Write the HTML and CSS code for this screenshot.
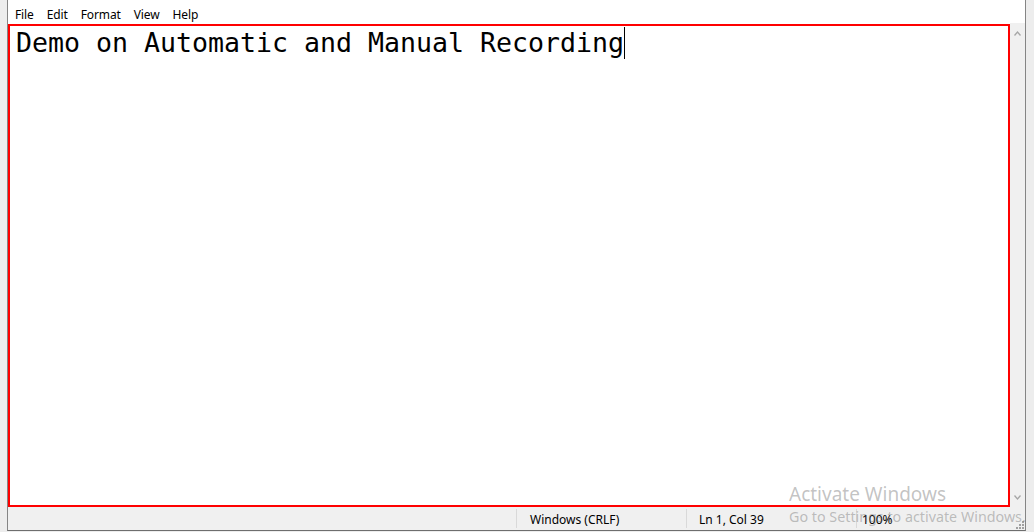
FILE: index.html
```html
<!DOCTYPE html>
<html lang="en">
<head>
<meta charset="utf-8">
<title>Untitled - Notepad</title>
<link rel="stylesheet" href="styles.css">
</head>
<body>
<div class="window">
  <nav class="menubar">
    <span class="menu-item">File</span>
    <span class="menu-item">Edit</span>
    <span class="menu-item">Format</span>
    <span class="menu-item">View</span>
    <span class="menu-item">Help</span>
  </nav>
  <div class="main">
    <div class="editor"><span class="line">Demo on Automatic and Manual Recording</span><span class="caret"></span></div>
    <div class="scrollbar">
      <span class="arrow arrow-up"><svg width="7" height="5" viewBox="0 0 7 5"><polyline points="0.5,4.5 3.5,1 6.5,4.5" fill="none" stroke="#a6a6a6" stroke-width="1.3"/></svg></span>
      <span class="arrow arrow-down"><svg width="7" height="5" viewBox="0 0 7 5"><polyline points="0.5,0.5 3.5,4 6.5,0.5" fill="none" stroke="#a6a6a6" stroke-width="1.3"/></svg></span>
    </div>
    <div class="highlight"></div>
  </div>
  <div class="statusbar">
    <div class="spacer"></div>
    <div class="pane pane-eol">Windows (CRLF)</div>
    <div class="pane pane-pos">Ln 1, Col 39</div>
    <div class="pane pane-zoom">100%</div>
    <span class="grip"><svg width="8" height="8" viewBox="0 0 8 8"><g fill="#a0a0a0"><rect x="6" y="0" width="2" height="2"/><rect x="3" y="3" width="2" height="2"/><rect x="6" y="3" width="2" height="2"/><rect x="0" y="6" width="2" height="2"/><rect x="3" y="6" width="2" height="2"/><rect x="6" y="6" width="2" height="2"/></g></svg></span>
  </div>
</div>
<div class="watermark">
  <div class="wm-title">Activate Windows</div>
  <div class="wm-sub">Go to Settings to activate Windows.</div>
</div>
</body>
</html>
```
FILE: styles.css
```css
html, body {
  margin: 0;
  padding: 0;
}
body {
  width: 1034px;
  height: 532px;
  overflow: hidden;
  position: relative;
  background: #ededed;
  font-family: "Noto Sans", "Segoe UI", sans-serif;
  color: #000;
}
.window {
  margin-left: 7px;
  width: 1019px;
  box-sizing: border-box;
  border-left: 1px solid #858585;
  border-right: 1px solid #858585;
  border-bottom: 1px solid #6e6e6e;
  background: #fff;
  display: flex;
  flex-direction: column;
}
.menubar {
  height: 23px;
  box-sizing: border-box;
  padding: 7px 0 0 0.5px;
  display: flex;
  font-size: 12px;
  line-height: 16px;
  letter-spacing: -0.12px;
  background: #fff;
}
.menu-item {
  padding: 0 6.5px;
}
.main {
  position: relative;
  display: flex;
  height: 484px;
}
.editor {
  flex: 1;
  padding: 4px 0 0 8px;
  font-family: "DejaVu Sans Mono", "Liberation Mono", monospace;
  font-size: 26.58px;
  line-height: 32px;
  white-space: pre;
  color: #000;
  background: #fff;
}
.caret {
  display: inline-block;
  width: 1px;
  height: 32px;
  background: #000;
  vertical-align: top;
}
.scrollbar {
  width: 15px;
  background: #f0f0f0;
  display: flex;
  flex-direction: column;
  justify-content: space-between;
}
.arrow {
  height: 20px;
  display: flex;
  align-items: center;
  justify-content: center;
}
.arrow svg {
  display: block;
}
.highlight {
  position: absolute;
  left: 0;
  top: 1px;
  width: 1002px;
  height: 483px;
  box-sizing: border-box;
  border: 2px solid #ff0000;
  pointer-events: none;
}
.statusbar {
  position: relative;
  height: 23px;
  background: #f0f0f0;
  display: flex;
  align-items: center;
  font-size: 12px;
}
.spacer {
  flex: 1;
}
.pane {
  height: 19px;
  line-height: 19px;
  padding-top: 1px;
  box-sizing: border-box;
  border-left: 1px solid #d9d9d9;
  white-space: nowrap;
}
.pane-eol {
  width: 170px;
  padding-left: 13px;
}
.pane-pos {
  width: 170px;
  padding-left: 12px;
}
.pane-zoom {
  width: 169px;
  padding-left: 5px;
}
.grip {
  position: absolute;
  right: 1px;
  bottom: 1px;
  line-height: 0;
}
.watermark {
  position: absolute;
  left: 789px;
  top: 482px;
  color: rgba(110, 110, 110, 0.42);
  white-space: nowrap;
  pointer-events: none;
}
.wm-title {
  font-size: 19px;
  line-height: 25px;
}
.wm-sub {
  font-size: 14.3px;
  line-height: 20px;
}
```
